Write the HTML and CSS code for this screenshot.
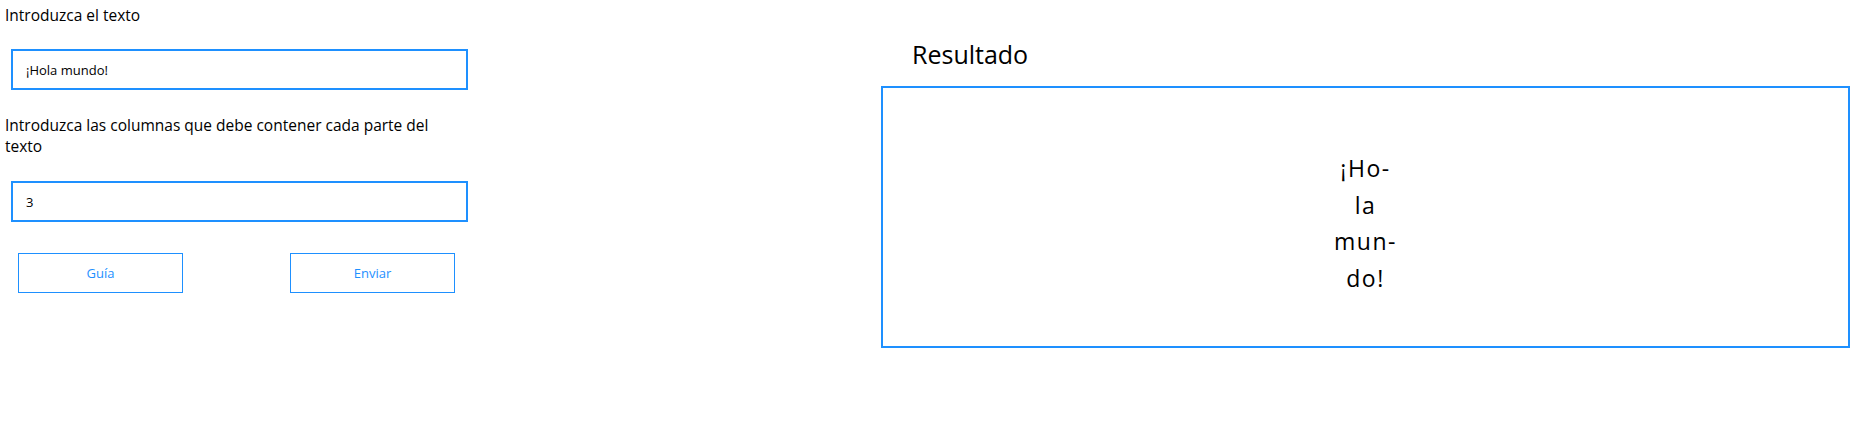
FILE: index.html
```html
<!DOCTYPE html>
<html lang="es">
<head>
  <meta charset="UTF-8" />
  <meta name="viewport" content="width=device-width, initial-scale=1.0"/>
  <title>Dividir texto</title>
  <link rel="stylesheet" href="styles.css">
</head>
<body>

  <div class="page">

    <!-- Formulario -->
    <div class="form-panel">
      <label class="field-label" for="texto">Introduzca el texto</label>
      <input type="text" id="texto" class="field-input" value="¡Hola mundo!" />

      <label class="field-label field-label-wide" for="columnas">Introduzca las columnas que debe contener cada parte del texto</label>
      <input type="text" id="columnas" class="field-input" value="3" />

      <div class="button-row">
        <button class="btn-outline">Guía</button>
        <button class="btn-outline">Enviar</button>
      </div>
    </div>

    <!-- Resultado -->
    <div class="result-panel">
      <h2 class="result-title">Resultado</h2>
      <div class="result-box">
        <div class="result-text">
          <div>¡Ho-</div>
          <div>la</div>
          <div>mun-</div>
          <div>do!</div>
        </div>
      </div>
    </div>

  </div>

</body>
</html>
```

FILE: styles.css
```css
/* Global Styles */
* {
  margin: 0;
  padding: 0;
  box-sizing: border-box;
}

body {
  font-family: 'Open Sans', 'Noto Sans', sans-serif;
  color: #000;
  background: #fff;
}

.page {
  display: flex;
  align-items: flex-start;
}

/* Form Styles */
.form-panel {
  flex: 0 0 881px;
  display: flex;
  flex-direction: column;
  align-items: flex-start;
  padding: 5px 0 0 5px;
}

.field-label {
  display: block;
  font-size: 15.5px;
  line-height: 21px;
}

.field-label-wide {
  max-width: 450px;
  margin-top: 25px;
}

.field-input {
  width: 457px;
  height: 41px;
  margin: 23px 0 0 6px;
  padding: 0 13px;
  border: 2px solid #1e90ff;
  font-family: inherit;
  font-size: 13px;
  color: #000;
  outline: none;
}

.field-label-wide + .field-input {
  margin-top: 24px;
}

.button-row {
  display: flex;
  justify-content: space-between;
  width: 437px;
  margin: 31px 0 0 13px;
}

.btn-outline {
  width: 165px;
  height: 40px;
  background: #fff;
  border: 1px solid #1e90ff;
  color: #1e90ff;
  font-family: inherit;
  font-size: 13px;
  cursor: pointer;
}

/* Result Styles */
.result-panel {
  flex: 1;
  padding: 37px 25px 0 0;
}

.result-title {
  font-size: 25px;
  font-weight: normal;
  line-height: 34px;
  padding-left: 31px;
  margin-bottom: 15px;
}

.result-box {
  height: 262px;
  border: 2px solid #1e90ff;
  display: flex;
  justify-content: center;
  align-items: center;
  padding-top: 12px;
}

.result-text {
  text-align: center;
  font-size: 23px;
  line-height: 36.5px;
  letter-spacing: 1.5px;
}
```
